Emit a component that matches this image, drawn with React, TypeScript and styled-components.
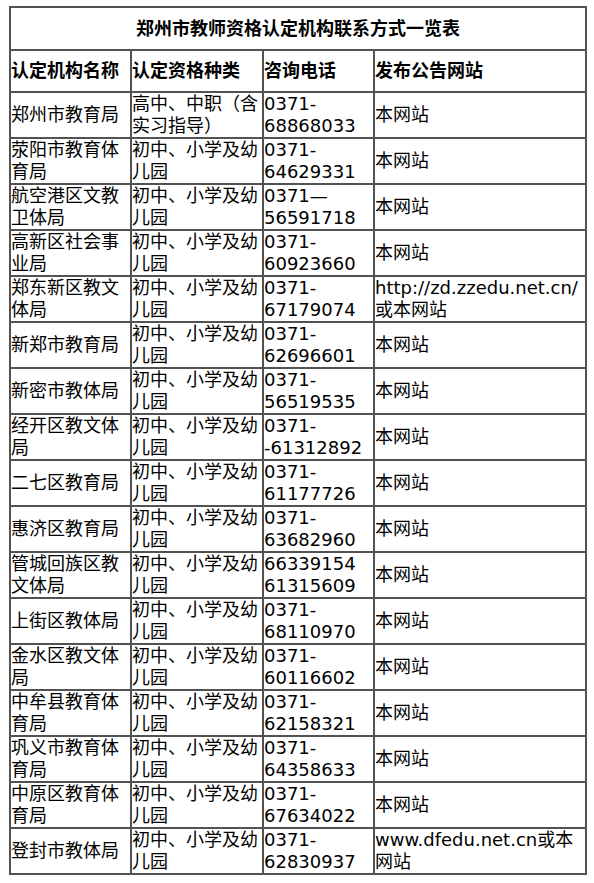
import React from "react";
import styled, { createGlobalStyle } from "styled-components";

const GlobalStyle = createGlobalStyle`
  html, body {
    margin: 0;
    padding: 0;
    background: #fff;
  }
  body {
    font-family: "DejaVu Sans", "Noto Sans CJK SC", sans-serif;
    color: #000;
  }
`;

const Page = styled.div`
  padding: 6px 0 0 9px;
`;

const Table = styled.table`
  width: 576px;
  border-collapse: collapse;
  table-layout: fixed;
  font-size: 18px;
  line-height: 22px;
  border: 2px solid #525252;
`;

const Col = styled.col<{ $w: number }>`
  width: ${(p) => p.$w}px;
`;

const TitleCell = styled.th`
  height: 41px;
  padding: 0;
  border: 2px solid #525252;
  font-weight: bold;
  text-align: center;
  vertical-align: middle;
`;

const HeadCell = styled.th`
  height: 40px;
  padding: 0;
  border: 2px solid #525252;
  font-weight: bold;
  text-align: left;
  vertical-align: middle;
  white-space: nowrap;
`;

const Cell = styled.td`
  height: 44px;
  padding: 0;
  border: 2px solid #525252;
  text-align: left;
  vertical-align: middle;
  word-break: normal;
`;

type Row = {
  org: string;
  kind: string;
  phone: React.ReactNode;
  site: string;
};

const basic = "初中、小学及幼儿园";

const rows: Row[] = [
  { org: "郑州市教育局", kind: "高中、中职（含实习指导）", phone: "0371-68868033", site: "本网站" },
  { org: "荥阳市教育体育局", kind: basic, phone: "0371-64629331", site: "本网站" },
  { org: "航空港区文教卫体局", kind: basic, phone: "0371—56591718", site: "本网站" },
  { org: "高新区社会事业局", kind: basic, phone: "0371-60923660", site: "本网站" },
  { org: "郑东新区教文体局", kind: basic, phone: "0371-67179074", site: "http://zd.zzedu.net.cn/或本网站" },
  { org: "新郑市教育局", kind: basic, phone: "0371-62696601", site: "本网站" },
  { org: "新密市教体局", kind: basic, phone: "0371-56519535", site: "本网站" },
  { org: "经开区教文体局", kind: basic, phone: <>0371-<wbr />-61312892</>, site: "本网站" },
  { org: "二七区教育局", kind: basic, phone: "0371-61177726", site: "本网站" },
  { org: "惠济区教育局", kind: basic, phone: "0371-63682960", site: "本网站" },
  { org: "管城回族区教文体局", kind: basic, phone: "66339154 61315609", site: "本网站" },
  { org: "上街区教体局", kind: basic, phone: "0371-68110970", site: "本网站" },
  { org: "金水区教文体局", kind: basic, phone: "0371-60116602", site: "本网站" },
  { org: "中牟县教育体育局", kind: basic, phone: "0371-62158321", site: "本网站" },
  { org: "巩义市教育体育局", kind: basic, phone: "0371-64358633", site: "本网站" },
  { org: "中原区教育体育局", kind: basic, phone: "0371-67634022", site: "本网站" },
  { org: "登封市教体局", kind: basic, phone: "0371-62830937", site: "www.dfedu.net.cn或本网站" },
];

export default function App() {
  return (
    <Page>
      <GlobalStyle />
      <Table>
        <colgroup>
          <Col $w={121} />
          <Col $w={132} />
          <Col $w={111} />
          <Col $w={212} />
        </colgroup>
        <thead>
          <tr>
            <TitleCell colSpan={4}>郑州市教师资格认定机构联系方式一览表</TitleCell>
          </tr>
          <tr>
            <HeadCell>认定机构名称</HeadCell>
            <HeadCell>认定资格种类</HeadCell>
            <HeadCell>咨询电话</HeadCell>
            <HeadCell>发布公告网站</HeadCell>
          </tr>
        </thead>
        <tbody>
          {rows.map((r, i) => (
            <tr key={i}>
              <Cell>{r.org}</Cell>
              <Cell>{r.kind}</Cell>
              <Cell>{r.phone}</Cell>
              <Cell>{r.site}</Cell>
            </tr>
          ))}
        </tbody>
      </Table>
    </Page>
  );
}
